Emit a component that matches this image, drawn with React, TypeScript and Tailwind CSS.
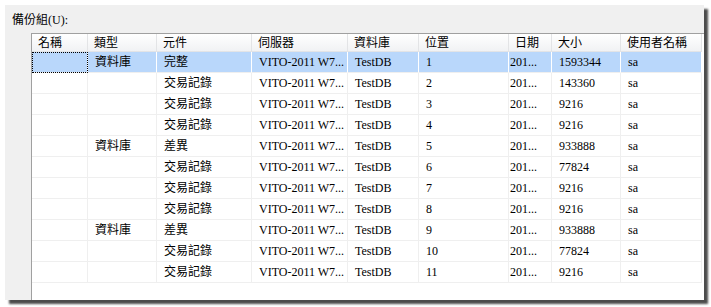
import React from 'react';

const GRID = 'grid grid-cols-[56px_69px_95px_96px_71px_90px_43px_69px_81px] w-[670px]';

const headers = ['名稱', '類型', '元件', '伺服器', '資料庫', '位置', '日期', '大小', '使用者名稱'];

const rows: string[][] = [
  ['', '資料庫', '完整', 'VITO-2011 W7...', 'TestDB', '1', '201...', '1593344', 'sa'],
  ['', '', '交易記錄', 'VITO-2011 W7...', 'TestDB', '2', '201...', '143360', 'sa'],
  ['', '', '交易記錄', 'VITO-2011 W7...', 'TestDB', '3', '201...', '9216', 'sa'],
  ['', '', '交易記錄', 'VITO-2011 W7...', 'TestDB', '4', '201...', '9216', 'sa'],
  ['', '資料庫', '差異', 'VITO-2011 W7...', 'TestDB', '5', '201...', '933888', 'sa'],
  ['', '', '交易記錄', 'VITO-2011 W7...', 'TestDB', '6', '201...', '77824', 'sa'],
  ['', '', '交易記錄', 'VITO-2011 W7...', 'TestDB', '7', '201...', '9216', 'sa'],
  ['', '', '交易記錄', 'VITO-2011 W7...', 'TestDB', '8', '201...', '9216', 'sa'],
  ['', '資料庫', '差異', 'VITO-2011 W7...', 'TestDB', '9', '201...', '933888', 'sa'],
  ['', '', '交易記錄', 'VITO-2011 W7...', 'TestDB', '10', '201...', '77824', 'sa'],
  ['', '', '交易記錄', 'VITO-2011 W7...', 'TestDB', '11', '201...', '9216', 'sa'],
];

const font = 'font-["Liberation_Serif","Noto_Sans_CJK_TC",serif] text-[12px] text-black';

export default function App() {
  return (
    <div className={`w-[711px] h-[307px] bg-white pl-[5px] pt-[5px] overflow-hidden ${font}`}>
      {/* dialog panel */}
      <div className="w-[699px] h-[295px] bg-[#f0f0f0] flex flex-col shadow-[4px_4px_2px_rgba(0,0,0,0.7)]">
        <div className="ml-[7px] mt-[7px] h-[16px] leading-[16px]">備份組(U):</div>

        {/* backup set list */}
        <div className="ml-[26px] mt-[5px] flex-1 bg-white border-l border-t border-[#a0a0a0] overflow-hidden">
          <div className={GRID}>
            {headers.map((h) => (
              <div
                key={h}
                className="h-[18px] pl-[6px] flex items-center whitespace-nowrap border-r border-b border-[#e3e4e6] bg-linear-to-b from-white to-[#f1f2f4]"
              >
                {h}
              </div>
            ))}
          </div>

          {rows.map((r, i) => {
            const sel = i === 0;
            return (
              <div key={i} className={GRID}>
                {r.map((c, j) => (
                  <div
                    key={j}
                    className={`h-[21px] flex items-center whitespace-nowrap overflow-hidden border-b border-r ${
                      j === 6 ? 'pl-[1px]' : 'pl-[7px]'
                    } ${sel ? 'bg-[#b9d7fb] border-r-white border-b-[#efefef]' : 'border-[#efefef]'} ${
                      sel && j === 0 ? 'outline-1 outline-dotted outline-black -outline-offset-1' : ''
                    }`}
                  >
                    {c}
                  </div>
                ))}
              </div>
            );
          })}
        </div>
      </div>
    </div>
  );
}
